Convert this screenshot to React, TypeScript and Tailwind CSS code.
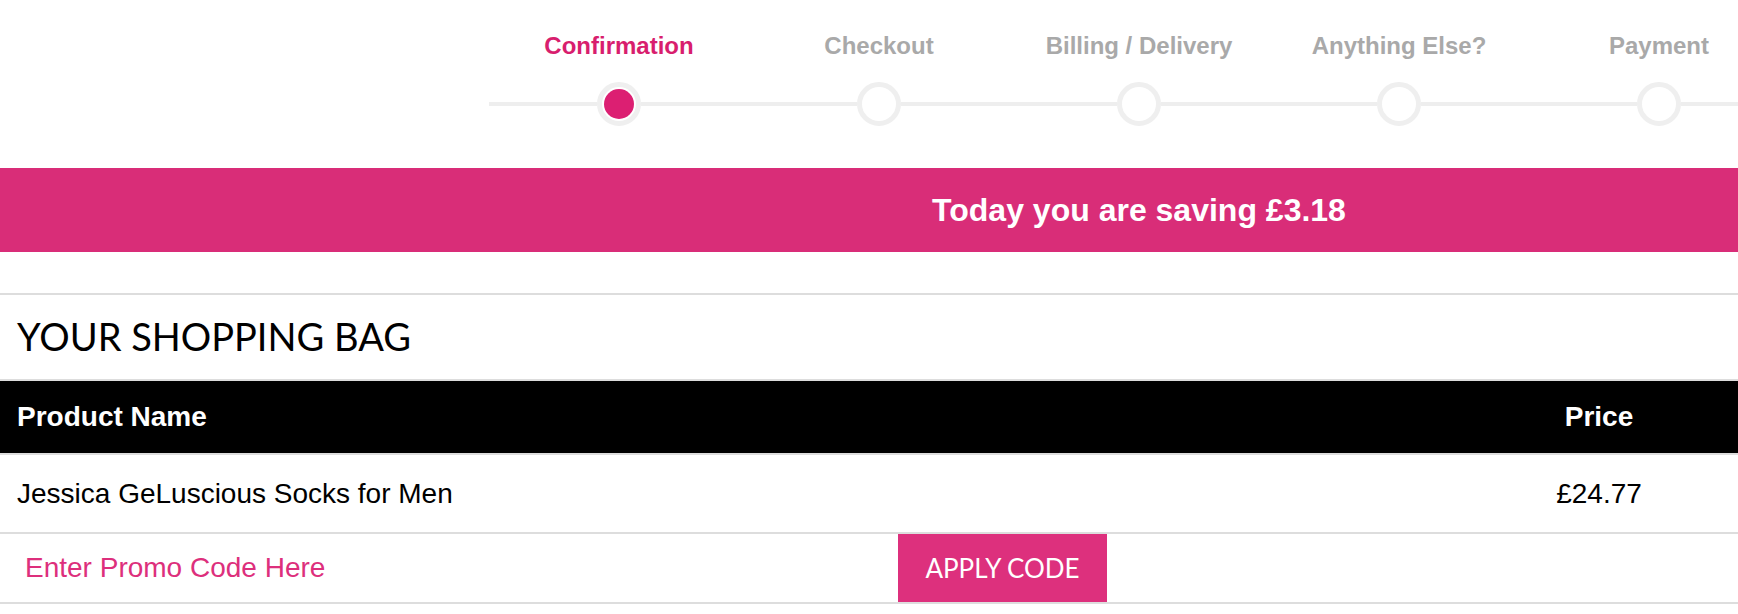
import React from 'react'

const steps = ['Confirmation', 'Checkout', 'Billing / Delivery', 'Anything Else?', 'Payment']

function Step({ label, active }: { label: string; active: boolean }) {
  return (
    <div className="w-[260px] shrink-0 flex flex-col items-center">
      <div
        className={`text-[24px] leading-[24px] font-bold whitespace-nowrap ${
          active ? 'text-[#d81e6e]' : 'text-[#a9a9a9]'
        }`}
      >
        {label}
      </div>
      <div className="mt-[24px] w-full flex items-center">
        <div className="flex-1 h-[4px] bg-[#eeeeee]" />
        <div className="w-[44px] h-[44px] rounded-full border-[5px] border-[#efefef] bg-white flex items-center justify-center">
          {active && <div className="w-[30px] h-[30px] rounded-full bg-[#dc1f72]" />}
        </div>
        <div className="flex-1 h-[4px] bg-[#eeeeee]" />
      </div>
    </div>
  )
}

export default function App() {
  return (
    <div className="min-h-screen w-full overflow-hidden bg-white font-['Liberation_Sans',Arial,sans-serif]">
      {/* progress steps */}
      <div className="h-[168px] pt-[34px] pl-[489px] flex">
        {steps.map((s, i) => (
          <Step key={s} label={s} active={i === 0} />
        ))}
      </div>

      {/* savings banner */}
      <div className="h-[84px] bg-[#d92d78] flex items-center justify-center pl-[540px]">
        <span className="text-white font-bold text-[32px] leading-none">Today you are saving £3.18</span>
      </div>

      <div className="h-[41px]" />

      {/* shopping bag */}
      <div className="border-t-2 border-b-2 border-[#dddddd] h-[88px] pt-[22px] pl-[17px]">
        <h1 className="font-['Lato',sans-serif] text-[38px] leading-[38px] text-black font-normal">YOUR SHOPPING BAG</h1>
      </div>

      <div className="bg-black h-[72px] flex items-center pl-[17px] pr-[59px] text-white font-bold text-[28px] leading-[28px]">
        <div className="flex-1">Product Name</div>
        <div className="w-[160px] text-center">Price</div>
      </div>

      <div className="border-t-2 border-[#dddddd] h-[79px] flex items-center pl-[17px] pr-[59px] text-black text-[28px] leading-[28px]">
        <div className="flex-1">Jessica GeLuscious Socks for Men</div>
        <div className="w-[160px] text-center">£24.77</div>
      </div>

      <div className="border-t-2 border-b-2 border-[#dddddd] h-[72px] flex">
        <input
          type="text"
          placeholder="Enter Promo Code Here"
          className="w-[898px] h-full pl-[25px] text-[28px] text-[#dd2f7c] placeholder:text-[#dd2f7c] bg-white outline-none font-['Liberation_Sans',Arial,sans-serif]"
        />
        <button className="w-[209px] h-full bg-[#dd307d] text-white font-['Lato',sans-serif] text-[26px] leading-none uppercase">
          Apply Code
        </button>
      </div>
    </div>
  )
}
